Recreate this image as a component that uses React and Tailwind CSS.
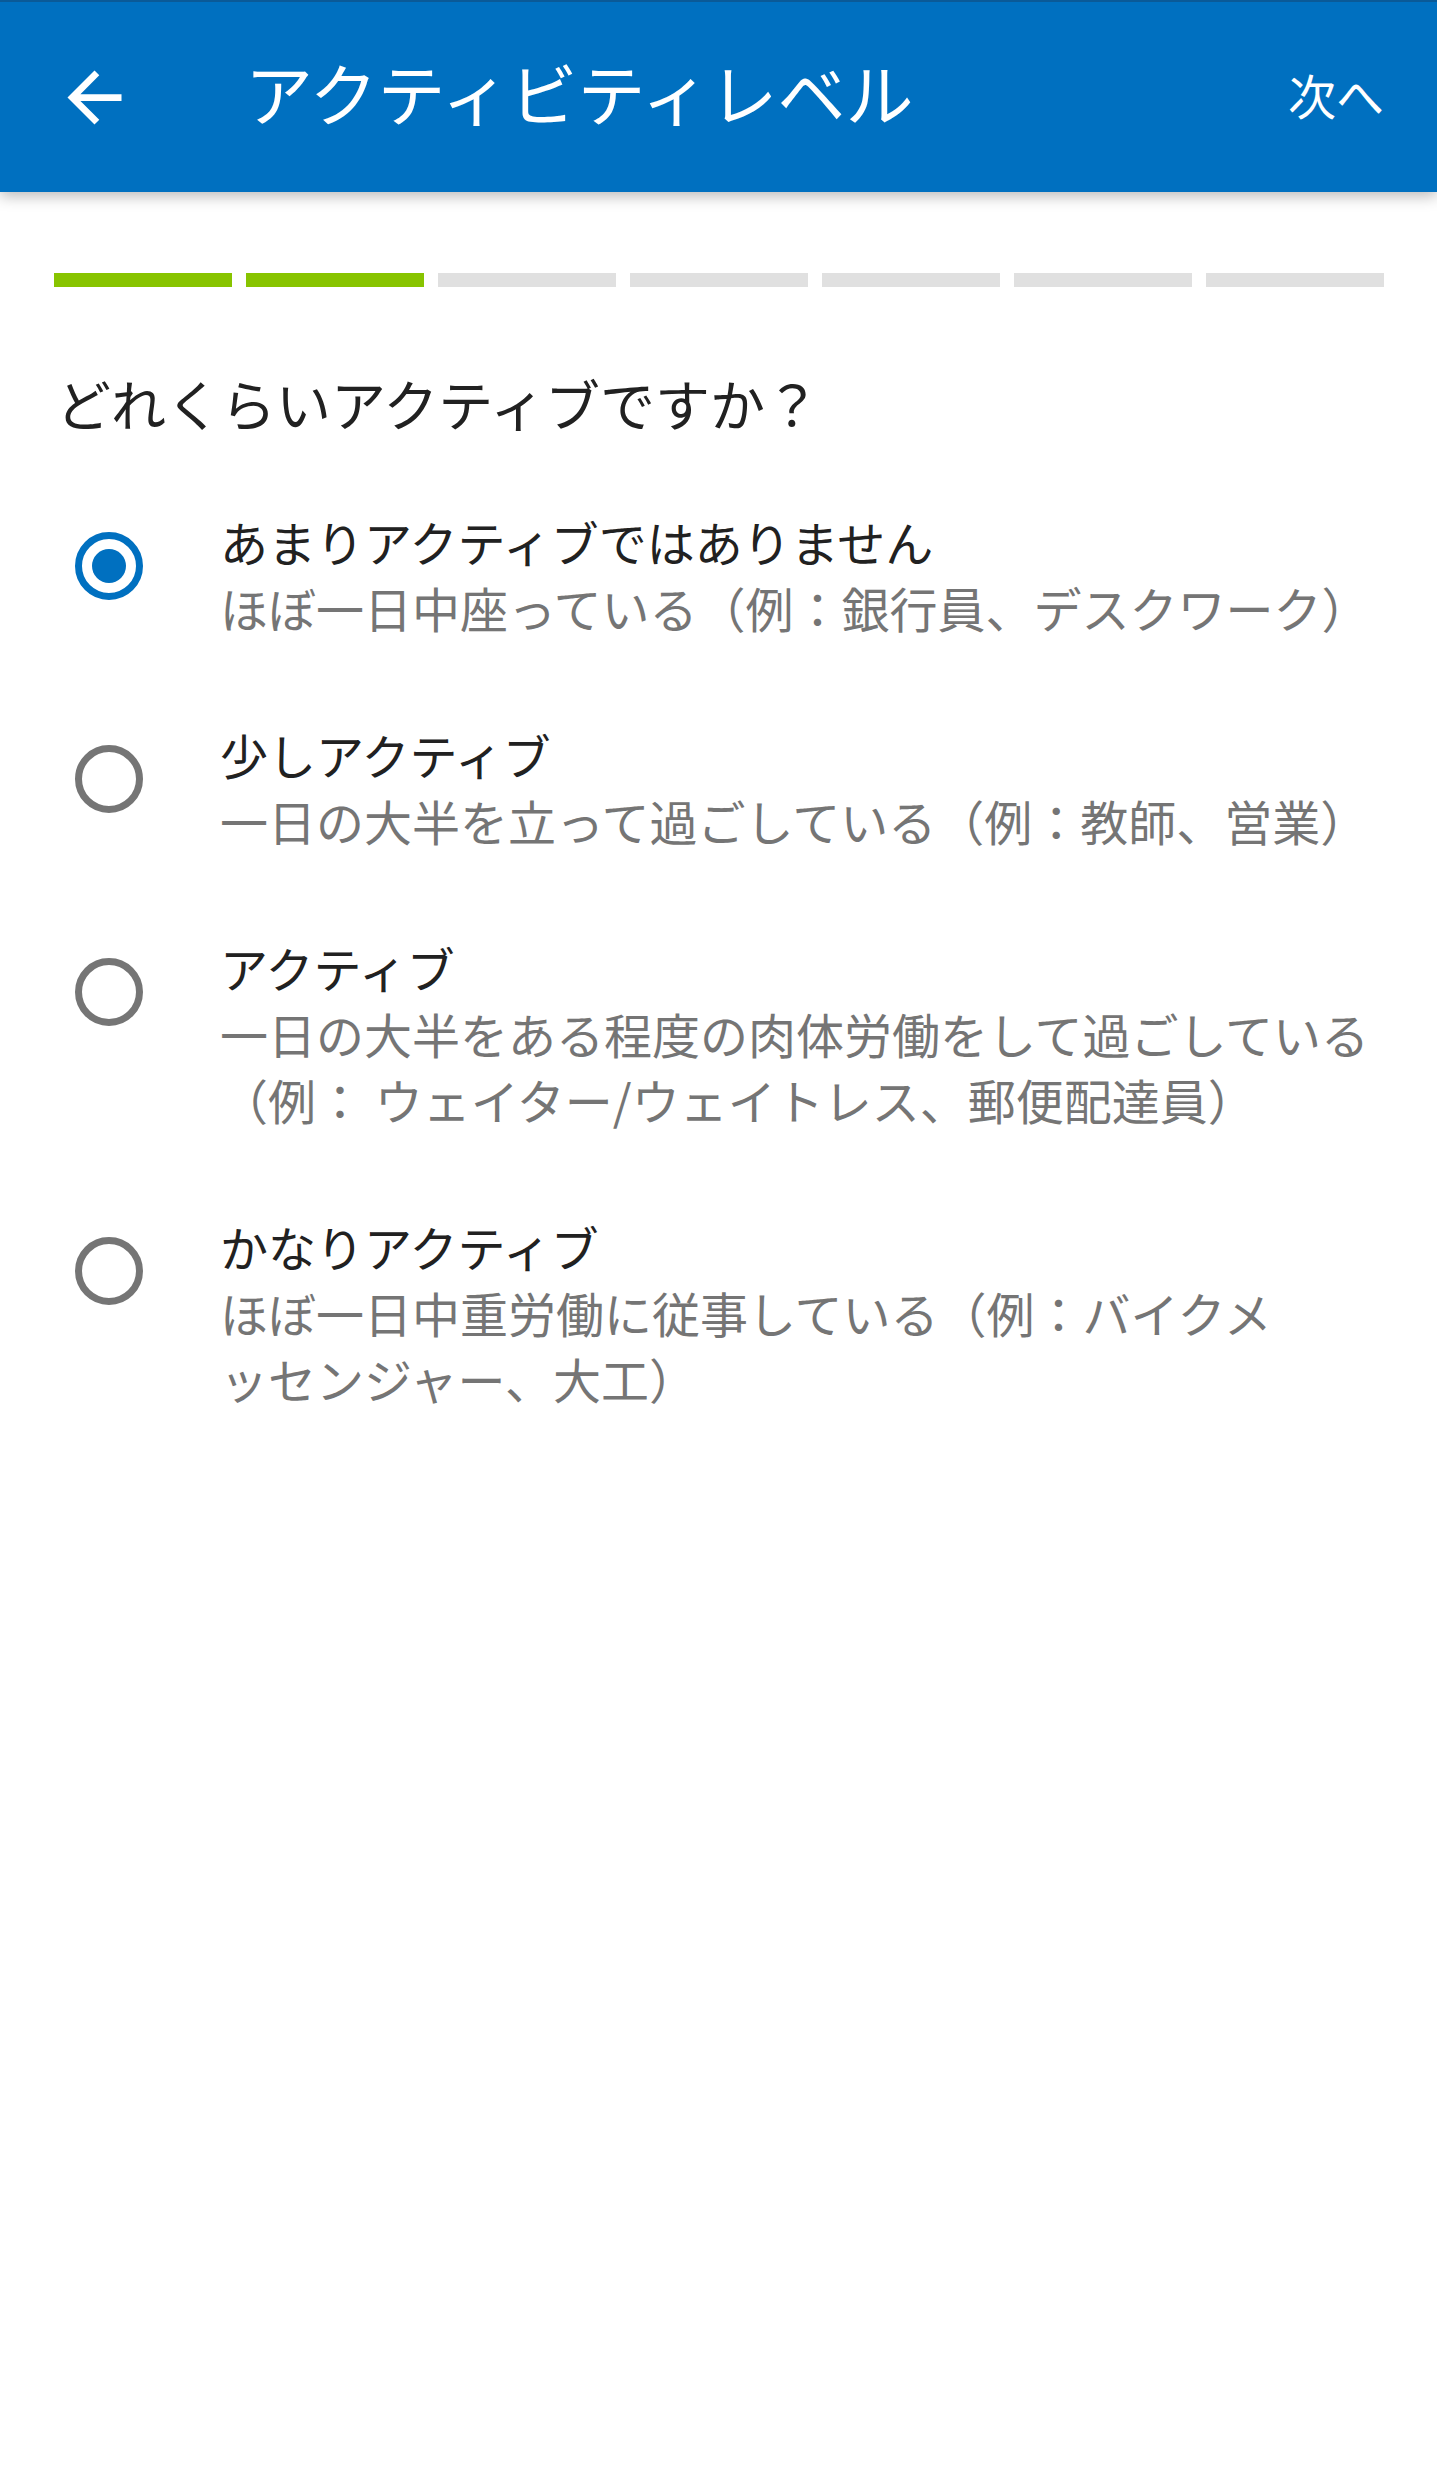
import React from "react";

const font = { fontFamily: '"Noto Sans CJK JP", "Noto Sans", sans-serif' };

function ArrowBack() {
  return (
    <svg width="81" height="81" viewBox="0 0 24 24" fill="white">
      <path d="M20 11H7.83l5.59-5.59L12 4l-8 8 8 8 1.41-1.41L7.83 13H20v-2z" />
    </svg>
  );
}

function Radio({ checked }) {
  return (
    <div
      className={
        "w-[68px] h-[68px] rounded-full border-[7px] flex items-center justify-center shrink-0 mt-[24px] " +
        (checked ? "border-[#0070c0]" : "border-[#757575]")
      }
    >
      {checked && <div className="w-[34px] h-[34px] rounded-full bg-[#0070c0]" />}
    </div>
  );
}

const options = [
  { title: "あまりアクティブではありません", lines: ["ほぼ一日中座っている（例：銀行員、デスクワーク）"], checked: true },
  { title: "少しアクティブ", lines: ["一日の大半を立って過ごしている（例：教師、営業）"] },
  {
    title: "アクティブ",
    lines: ["一日の大半をある程度の肉体労働をして過ごしている", "（例： ウェイター/ウェイトレス、郵便配達員）"],
  },
  {
    title: "かなりアクティブ",
    lines: ["ほぼ一日中重労働に従事している（例：バイクメ", "ッセンジャー、大工）"],
  },
];

export default function App() {
  return (
    <div className="w-[1437px] min-h-[2478px] bg-white" style={font}>
      <header className="relative z-10 h-[192px] bg-[#0070c0] border-t-[2px] border-[#0a5a98] flex items-center pl-[54px] pr-[53px] shadow-[0_4px_14px_rgba(0,0,0,0.28)]">
        <ArrowBack />
        <div className="ml-[110px] pb-[10px] text-white text-[68px] leading-none">アクティビティレベル</div>
        <div className="ml-auto pb-[6px] text-white text-[48px] leading-none">次へ</div>
      </header>

      <div className="mt-[81px] pl-[54px] pr-[53px] flex gap-[14px]">
        {[0, 1, 2, 3, 4, 5, 6].map((i) => (
          <div key={i} className={"flex-1 h-[14px] " + (i < 2 ? "bg-[#88c400]" : "bg-[#e0e0e0]")} />
        ))}
      </div>

      <div className="mt-[78px] pl-[56px] text-[55px] leading-[74px] text-[#212121]">どれくらいアクティブですか？</div>

      <div className="mt-[69px] flex flex-col gap-[81px]">
        {options.map((o, i) => (
          <div key={i} className="flex items-start pl-[75px] gap-[77px]">
            <Radio checked={o.checked} />
            <div className="whitespace-nowrap text-[48px] leading-[66px]">
              <div className="text-[#212121]">{o.title}</div>
              {o.lines.map((l, j) => (
                <div key={j} className="text-[#757575]">{l}</div>
              ))}
            </div>
          </div>
        ))}
      </div>
    </div>
  );
}
